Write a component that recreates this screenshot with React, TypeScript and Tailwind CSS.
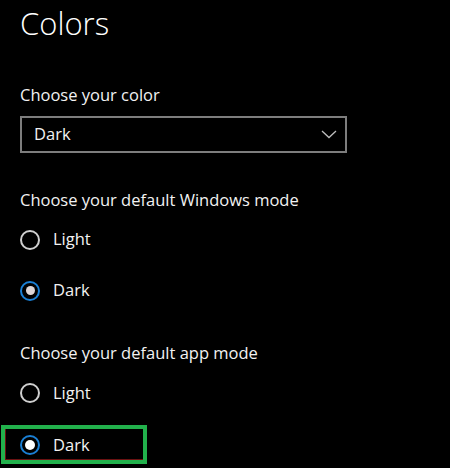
import React from 'react';

const font = { fontFamily: '"Open Sans", "Noto Sans", sans-serif' };

const Radio: React.FC<{ checked?: boolean; bright?: boolean }> = ({ checked, bright }) => {
  if (!checked) {
    return <span className="block h-[20px] w-[20px] shrink-0 rounded-full border-2 border-[#cfcfcf]" />;
  }
  return (
    <span className="flex h-[20px] w-[20px] shrink-0 items-center justify-center rounded-full border-2 border-[#1a7fd4]">
      <span className={bright ? 'block h-[10px] w-[10px] rounded-full bg-white' : 'block h-[9px] w-[9px] rounded-full bg-[#ded6d6]'} />
    </span>
  );
};

export default function App() {
  return (
    <div className="h-[468px] w-[450px] overflow-hidden bg-black text-[#f2f2f2]" style={font}>
      <div className="px-[20px]">
        <h1 className="text-[31px] font-light leading-[46px] text-white">Colors</h1>
        <div className="mt-[37px] text-[16.5px] leading-[24px]">Choose your color</div>
        <div className="mt-[9px] flex h-[37px] w-[327px] items-center justify-between border-2 border-[#7d7d7d] pl-[12px] pr-[8px]">
          <span className="text-[16.5px]">Dark</span>
          <svg width="16" height="9" viewBox="0 0 16 9" fill="none">
            <path d="M1 1l7 6.5 7-6.5" stroke="#bdbdbd" strokeWidth="1.3" />
          </svg>
        </div>
        <div className="mt-[35px] text-[16.5px] leading-[24px]">Choose your default Windows mode</div>
        <div className="mt-[2px] flex h-[51px] items-center gap-[13px]">
          <Radio />
          <span className="text-[16.5px]">Light</span>
        </div>
        <div className="flex h-[51px] items-center gap-[13px]">
          <Radio checked />
          <span className="text-[16.5px]">Dark</span>
        </div>
        <div className="mt-[25px] text-[16.5px] leading-[24px]">Choose your default app mode</div>
      </div>
      <div className="mt-[2px] flex h-[52px] items-center gap-[13px] pl-[20px]">
        <Radio />
        <span className="text-[16.5px]">Light</span>
      </div>
      <div className="relative flex h-[52px] items-center gap-[13px] pl-[20px]">
        <Radio checked bright />
        <span className="text-[16.5px]">Dark</span>
        <div className="absolute left-[1px] top-[6px] h-[39px] w-[146px] border-4 border-[#22b14c]">
          <div className="h-full w-full border-b border-l border-[#6b1212]" />
        </div>
      </div>
    </div>
  );
}
